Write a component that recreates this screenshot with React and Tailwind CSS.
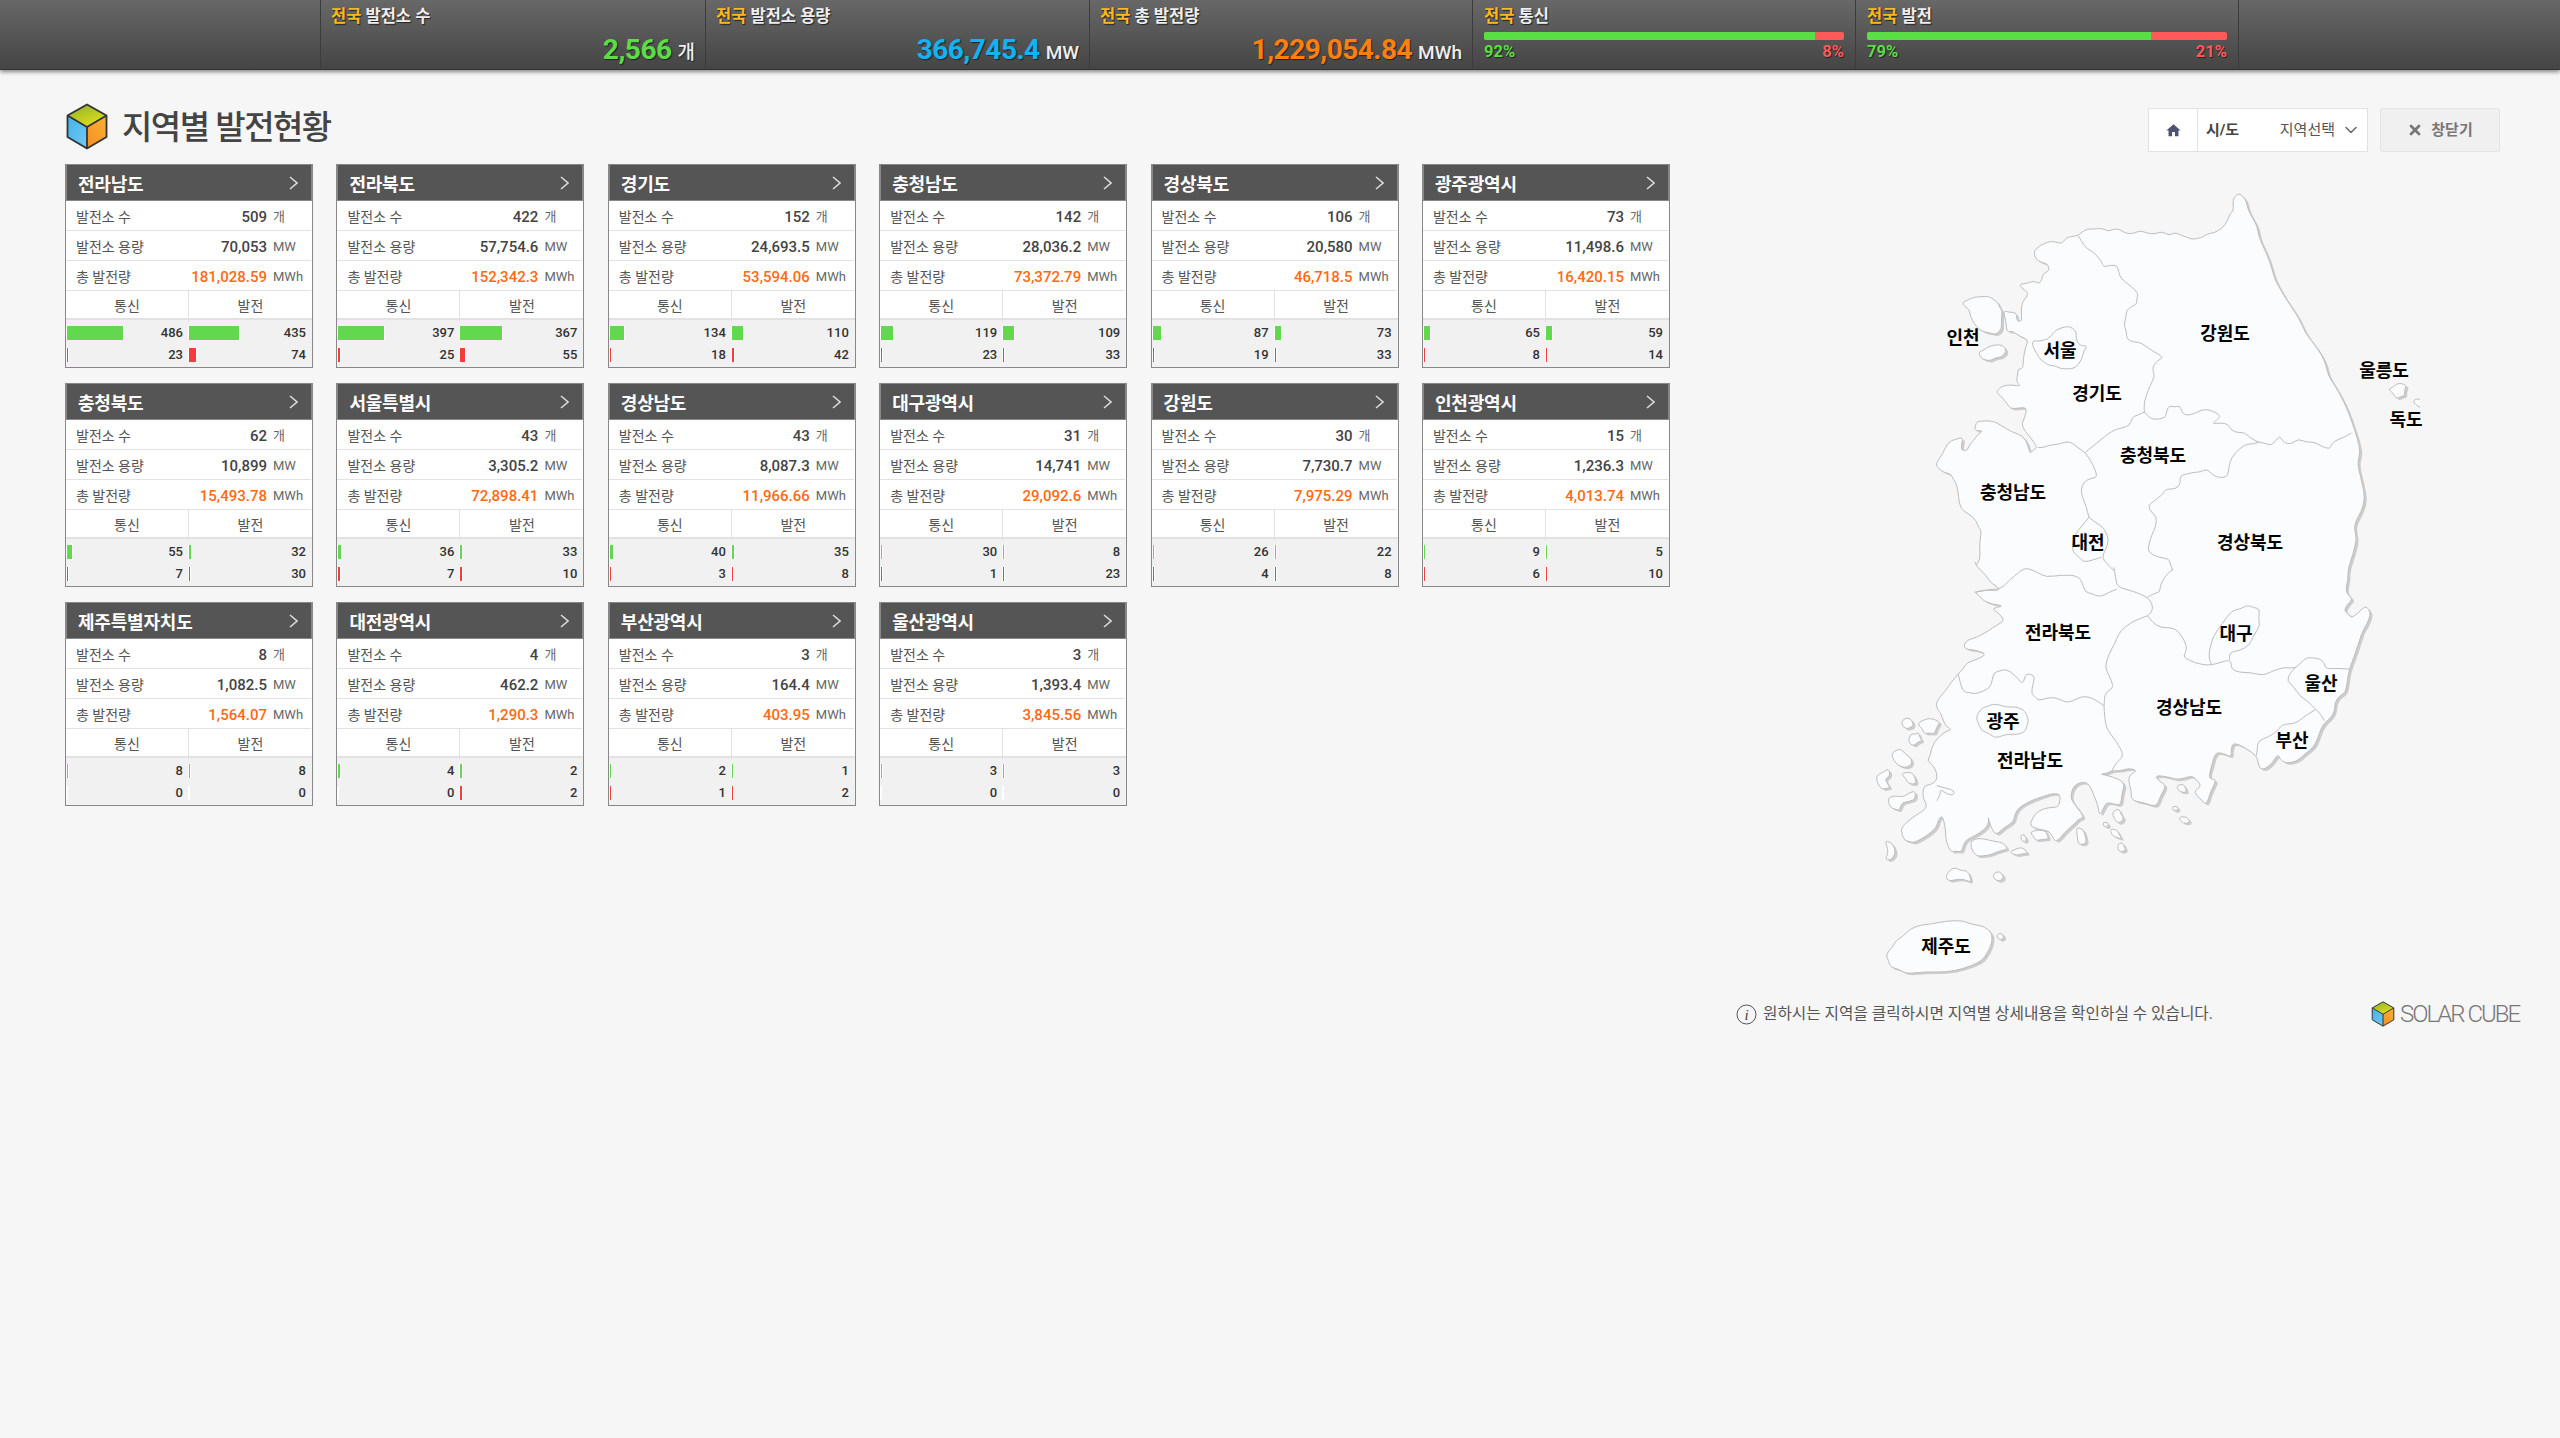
import React from 'react';
import { MdHome } from 'react-icons/md';
import { ChevronDown, X } from 'lucide-react';

const regions = [
  ['전라남도', '509', '70,053', '181,028.59', 486, 435, 23, 74, 56, 50, 1, 7],
  ['전라북도', '422', '57,754.6', '152,342.3', 397, 367, 25, 55, 46, 42, 2, 5],
  ['경기도', '152', '24,693.5', '53,594.06', 134, 110, 18, 42, 14, 11, 1, 2],
  ['충청남도', '142', '28,036.2', '73,372.79', 119, 109, 23, 33, 12, 11, 1, 1],
  ['경상북도', '106', '20,580', '46,718.5', 87, 73, 19, 33, 8, 6, 1, 1],
  ['광주광역시', '73', '11,498.6', '16,420.15', 65, 59, 8, 14, 6, 6, 1, 1],
  ['충청북도', '62', '10,899', '15,493.78', 55, 32, 7, 30, 5, 2, 1, 1],
  ['서울특별시', '43', '3,305.2', '72,898.41', 36, 33, 7, 10, 3, 2, 2, 2],
  ['경상남도', '43', '8,087.3', '11,966.66', 40, 35, 3, 8, 3, 2, 1, 1],
  ['대구광역시', '31', '14,741', '29,092.6', 30, 8, 1, 23, 1, 1, 1, 1],
  ['강원도', '30', '7,730.7', '7,975.29', 26, 22, 4, 8, 1, 1, 1, 1],
  ['인천광역시', '15', '1,236.3', '4,013.74', 9, 5, 6, 10, 1, 1, 1, 1],
  ['제주특별자치도', '8', '1,082.5', '1,564.07', 8, 8, 0, 0, 1, 1, 0, 0],
  ['대전광역시', '4', '462.2', '1,290.3', 4, 2, 0, 2, 2, 2, 0, 2],
  ['부산광역시', '3', '164.4', '403.95', 2, 1, 1, 2, 1, 1, 1, 1],
  ['울산광역시', '3', '1,393.4', '3,845.56', 3, 3, 0, 0, 1, 1, 0, 0],
];

const labels = [
  ['인천', 'left-[103px] top-[168px]'],
  ['서울', 'left-[200px] top-[181px]'],
  ['강원도', 'left-[365px] top-[164px]'],
  ['울릉도', 'left-[524px] top-[201px]'],
  ['독도', 'left-[546px] top-[250px]'],
  ['경기도', 'left-[237px] top-[224px]'],
  ['충청북도', 'left-[293px] top-[286px]'],
  ['충청남도', 'left-[153px] top-[323px]'],
  ['대전', 'left-[228px] top-[373px]'],
  ['경상북도', 'left-[390px] top-[373px]'],
  ['전라북도', 'left-[198px] top-[463px]'],
  ['대구', 'left-[376px] top-[464px]'],
  ['경상남도', 'left-[329px] top-[538px]'],
  ['울산', 'left-[461px] top-[514px]'],
  ['광주', 'left-[143px] top-[552px]'],
  ['전라남도', 'left-[170px] top-[591px]'],
  ['부산', 'left-[432px] top-[571px]'],
  ['제주도', 'left-[86px] top-[777px]'],
];

// traced from the two map crops, each has its own offset
const parse = (s, ox, oy) =>
  s.trim().split(/\s+/).map((p) => {
    const [x, y] = p.split(',').map(Number);
    return [x / 2.8 + ox, y / 3 + oy];
  });
const n = (s) => parse(s, 20, 0);
const o = (s) => parse(s, 0, 390);

// long straight runs get a small bump so the lines look like a hand drawn border
const roughen = (pts, closed) => {
  const out = [];
  const count = closed ? pts.length : pts.length - 1;
  for (let i = 0; i < count; i++) {
    const a = pts[i];
    const b = pts[(i + 1) % pts.length];
    out.push(a);
    const dx = b[0] - a[0];
    const dy = b[1] - a[1];
    const len = Math.hypot(dx, dy);
    if (len > 9) {
      const amp = 1.6 * Math.sin(a[0] * 1.7 + a[1] * 2.3);
      out.push([a[0] + dx / 2 - (dy / len) * amp, a[1] + dy / 2 + (dx / len) * amp]);
    }
  }
  if (!closed) out.push(pts[pts.length - 1]);
  return out;
};

const curve = (raw, closed) => {
  const pts = roughen(raw, closed);
  const mid = (a, b) => [(a[0] + b[0]) / 2, (a[1] + b[1]) / 2];
  const f = (p) => p[0].toFixed(1) + ' ' + p[1].toFixed(1);
  if (closed) {
    const last = pts[pts.length - 1];
    let d = 'M' + f(mid(last, pts[0]));
    pts.forEach((p, i) => {
      d += 'Q' + f(p) + ' ' + f(mid(p, pts[(i + 1) % pts.length]));
    });
    return d + 'Z';
  }
  let d = 'M' + f(pts[0]);
  for (let i = 1; i < pts.length - 1; i++) d += 'Q' + f(pts[i]) + ' ' + f(mid(pts[i], pts[i + 1]));
  return d + 'L' + f(pts[pts.length - 1]);
};

const land = [
  ...n('1005,72 990,85 990,125 975,150 955,180 915,195 890,208 860,205 825,190 810,200 790,187 770,195 730,185 700,195 670,180 640,187 615,178 580,180 555,200 520,207 510,225 470,218 430,245 435,270 470,285 475,305 455,315 445,345 430,335 390,345 415,370 400,395 398,455 385,458 380,430 345,425 355,490 370,485 415,512 405,545 400,600 385,600 380,635 395,652 345,650 325,670 345,690 365,720 412,716 395,770 442,836 420,855 400,800 340,770 300,755 272,757 265,785 290,785 262,815 245,845 228,845 232,805 190,820 155,885 165,900 200,915 215,945 225,1020 270,1055 285,1085 280,1150 270,1190'),
  ...o('320,5 345,40 370,75 392,95 320,100 345,125 400,140 370,150 405,185 360,215 295,245 290,270 355,285 300,310 275,345 240,395 210,440 235,490 258,512 225,530 200,570 188,605 215,640 215,665 180,680 178,720 185,750 115,805 125,845 150,852 215,805 230,768 240,840 255,880 285,880 300,840 355,805 358,770 380,830 430,790 445,745 520,710 560,705 555,745 500,755 475,800 530,815 550,850 600,795 628,775 590,720 600,680 635,670 655,710 670,770 690,730 730,740 742,670 670,645 705,635 745,630 775,635 750,660 760,725 830,745 858,680 825,650 885,662 930,650 955,680 935,700 970,740 1000,660 975,660 995,580 1040,595 1045,550 1110,590 1120,630 1135,630 1170,585 1190,612 1225,605 1270,565 1290,510 1320,475 1330,430 1360,400 1370,330 1405,220 1430,165 1415,140 1375,178 1355,155 1380,120 1360,90 1366,30'),
  ...n('1335,1110 1330,1060 1358,990 1340,900 1345,850 1325,770 1290,680 1255,620 1235,555 1190,490 1150,410 1105,330 1085,260 1060,200 1045,150 1025,95'),
];

const islands = [
  n('230,400 260,385 305,382 330,400 343,425 341,480 325,497 295,490 265,465 250,420'),
  n('275,550 300,535 345,528 355,548 340,565 310,575 285,570'),
  n('1422,660 1445,645 1475,650 1470,680 1445,690'),
  n('1492,695 1505,688 1525,710 1510,715'),
  o('115,485 135,475 150,500 135,510 120,505'),
  o('160,495 195,478 225,490 210,525 180,525'),
  o('140,525 165,520 175,545 150,562 135,550'),
  o('88,585 115,570 135,590 145,615 120,625 95,605'),
  o('45,650 80,628 85,650 70,660 85,685 60,690'),
  o('115,645 145,640 158,675 135,675'),
  o('80,715 120,715 155,695 155,720 120,730 110,755 85,745'),
  o('70,845 95,860 100,885 85,905 70,900 78,870'),
  o('240,950 265,925 300,935 310,970 280,960 245,965'),
  o('372,945 390,935 405,955 390,968 375,960'),
  o('310,845 350,840 400,850 415,870 380,880 345,890 320,885'),
  o('418,880 450,865 470,885 440,890'),
  o('448,830 460,825 468,845 455,850'),
  o('475,820 520,815 530,840 490,845'),
  o('605,805 625,810 635,850 610,855'),
  o('705,760 725,748 740,780 725,795'),
  o('680,790 695,790 695,805 682,803'),
  o('700,810 720,812 735,840 715,835'),
  o('720,855 735,850 745,875 725,880'),
  o('875,742 890,742 890,755 875,755'),
  o('890,775 915,772 925,790 905,795'),
  o('885,680 905,675 915,700 895,700'),
  o('72,1185 100,1145 140,1110 200,1095 290,1085 340,1100 370,1125 360,1175 335,1210 240,1240 130,1245 85,1225'),
  o('380,1130 395,1120 405,1135 392,1145'),
];

const inner = [
  n('425,515 470,510 490,485 525,472 550,490 555,525 580,530 565,570 545,598 520,600 490,590 460,580 440,555'),
  o('325,480 345,445 370,435 410,445 455,450 472,485 460,520 420,525 380,538 340,515'),
];

const borders = [
  n('555,200 580,240 610,265 625,295 665,290 675,330 725,375 720,405 690,425 683,470 690,510 730,520 795,565 765,590 770,620 745,680 740,730'),
  n('740,730 705,745 700,770 650,785 575,850'),
  n('442,836 475,828 530,815 575,850 610,925 570,940 565,980 585,1045'),
  n('740,730 760,750 800,745 810,710 840,710 855,740 905,720 955,740 930,765 975,765 985,785 1020,790 1060,820 1095,830 1120,800 1140,825 1170,810 1220,820 1260,840 1275,815 1320,792'),
  n('1060,820 1025,825 985,865 975,920 945,925 915,900 880,910 840,920 835,955 800,960 780,985 750,1010 775,1045 760,1100 750,1150 810,1170 820,1205'),
  n('585,1045 625,1075 640,1110 620,1165 655,1205'),
  n('585,1045 545,1100 540,1150 570,1180 620,1165'),
  o('711,25 720,85 805,115 820,145 805,170'),
  o('876,30 850,60 840,100 805,115'),
  o('320,100 395,90 445,40 470,28 520,55 610,50 630,100 670,115 720,90'),
  o('805,170 740,205 715,250 685,325 710,385 685,410 683,440 690,510 740,590 705,635'),
  o('275,345 290,400 320,405 365,385 375,340 410,330 455,375 465,345 490,355 480,405 500,425 540,415 580,432 630,410 683,440'),
  o('805,170 840,205 885,210 915,260 905,295 975,320 1035,302 1040,330 1060,340 1130,350 1190,325 1220,325'),
  o('985,318 975,300 990,230 1040,155 1085,138 1120,150 1120,200 1090,260 1035,280 1035,302'),
  o('1370,330 1305,330 1290,300 1250,295 1220,325 1195,365 1230,410 1275,450 1300,485'),
  o('1275,452 1225,490 1190,495 1170,515 1115,545 1110,590'),
  o('215,680 265,695 262,710 225,690 215,725'),
];

function Cube({ className }) {
  return (
    <svg viewBox="0 0 42 47" className={className}>
      <defs>
        <linearGradient id="cubeTop" x1="0.2" y1="0" x2="0.8" y2="1">
          <stop offset="0" stopColor="#8fb32c" />
          <stop offset="1" stopColor="#e8e21a" />
        </linearGradient>
        <linearGradient id="cubeLeft" x1="0" y1="0" x2="1" y2="1">
          <stop offset="0" stopColor="#3fb4ec" />
          <stop offset="1" stopColor="#74c8f0" />
        </linearGradient>
        <linearGradient id="cubeRight" x1="1" y1="0" x2="0" y2="1">
          <stop offset="0" stopColor="#f5b437" />
          <stop offset="1" stopColor="#fb8c21" />
        </linearGradient>
      </defs>
      <path d="M21 1.5 40.5 12.5 21 24 1.5 12.5Z" fill="url(#cubeTop)" />
      <path d="M1.5 12.5 21 24V45.5L1.5 34Z" fill="url(#cubeLeft)" />
      <path d="M40.5 12.5 21 24V45.5L40.5 34Z" fill="url(#cubeRight)" />
      <path d="M21 1.5 40.5 12.5V34L21 45.5 1.5 34V12.5ZM1.5 12.5 21 24 40.5 12.5M21 24V45.5" fill="none" stroke="#333" strokeWidth="1.8" strokeLinejoin="round" />
    </svg>
  );
}

function Stat({ width, title, value, unit, color }) {
  return (
    <div className={`${width} h-full border-l border-[#3c3c3c] px-[10px] pt-[7px] flex flex-col`}>
      <div className="text-[16.5px] font-bold leading-5 text-[#eee] [text-shadow:1px_1px_1px_#222]">
        <span className="text-[#ffb81c]">전국</span> {title}
      </div>
      <div className="flex items-baseline justify-end mt-[7px] [text-shadow:1px_1px_1px_#222]">
        <span className={`text-[28px] leading-8 font-bold tracking-[-0.5px] ${color}`}>{value}</span>
        <span className="text-[19px] leading-8 font-medium text-[#eee] ml-[6px]">{unit}</span>
      </div>
    </div>
  );
}

function Ratio({ width, title, good, bad }) {
  return (
    <div className={`${width} h-full border-l border-[#3c3c3c] px-[11px] pt-[7px] flex flex-col`}>
      <div className="text-[16.5px] font-bold leading-5 text-[#eee] [text-shadow:1px_1px_1px_#222]">
        <span className="text-[#ffb81c]">전국</span> {title}
      </div>
      <div className="flex h-[8px] mt-[5px] rounded-[2px] overflow-hidden bg-[#ff5a5a]">
        <div className="h-full bg-[#5bdd45]" style={{ width: good + '%' }} />
      </div>
      <div className="flex justify-between mt-[2px] text-[16.5px] leading-5 font-bold [text-shadow:1px_1px_1px_#222]">
        <span className="text-[#5bdd45]">{good}%</span>
        <span className="text-[#ff5a5a]">{bad}%</span>
      </div>
    </div>
  );
}

function Row({ label, value, unit, orange }) {
  return (
    <div className="h-[30px] flex items-center border-b border-[#e2e2e2] pl-[10px] pt-[3px] mr-[1px]">
      <span className="flex-1 text-[14px] text-[#555]">{label}</span>
      <span className={`text-[15px] font-medium ${orange ? 'text-[#ff6a13]' : 'text-[#444]'}`}>{value}</span>
      <span className="w-[38px] ml-[6px] text-[13px] text-[#666]">{unit}</span>
    </div>
  );
}

function BarRow({ w, value, color, pr }) {
  return (
    <div className={`h-[14px] flex items-center justify-between ${pr}`}>
      <div className="h-full flex border-x border-white bg-white min-w-[1px]">
        <div className={`h-full ${color}`} style={{ width: w }} />
      </div>
      <span className="text-[13px] font-medium text-[#333]">{value}</span>
    </div>
  );
}

function Card({ r }) {
  const [name, count, cap, gen, c1, g1, c2, g2, wc1, wg1, wc2, wg2] = r;
  return (
    <div className="h-[204px] bg-white border border-[#888]">
      <div className="h-[36px] bg-[#555] border border-[#888] border-t-0 flex items-center justify-between pl-[11px] pr-[13px] pt-[3px]">
        <span className="text-[18px] font-bold tracking-[-0.2px] text-white">{name}</span>
        <svg width="9" height="14" viewBox="0 0 9 14" fill="none" stroke="#ddd" strokeWidth="1.5" className="-mt-[3px]">
          <path d="M1 1 8 7 1 13" />
        </svg>
      </div>
      <Row label="발전소 수" value={count} unit="개" />
      <Row label="발전소 용량" value={cap} unit="MW" />
      <Row label="총 발전량" value={gen} unit="MWh" orange />
      <div className="h-[29px] grid grid-cols-[122px_1fr] border-b-2 border-[#e2e2e2] text-[14px] text-[#555] text-center leading-[31px]">
        <div>통신</div>
        <div className="border-l border-[#e2e2e2]">발전</div>
      </div>
      <div className="h-[47px] bg-[#f1f1f1] grid grid-cols-[122px_1fr]">
        <div className="pt-[6px] flex flex-col gap-[8px]">
          <BarRow w={wc1} value={c1} color="bg-[#62d84e]" pr="pr-[5px]" />
          <BarRow w={wc2} value={c2} color="bg-[#f63b3b]" pr="pr-[5px]" />
        </div>
        <div className="pt-[6px] flex flex-col gap-[8px]">
          <BarRow w={wg1} value={g1} color="bg-[#62d84e]" pr="pr-[6px]" />
          <BarRow w={wg2} value={g2} color="bg-[#f63b3b]" pr="pr-[6px]" />
        </div>
      </div>
    </div>
  );
}

function KoreaMap() {
  const landPath = curve(land, true);
  const islandPaths = islands.map((p) => curve(p, true));
  return (
    <svg viewBox="0 0 560 840" className="absolute inset-0 w-[560px] h-[840px]">
      <g fill="#cdcdcd" transform="translate(2.5 2)">
        <path d={landPath} />
        {islandPaths.map((d, i) => <path key={i} d={d} />)}
      </g>
      <g fill="#fbfcfe" stroke="#bdbdbd" strokeWidth="1">
        <path d={landPath} />
        {islandPaths.map((d, i) => <path key={i} d={d} />)}
      </g>
      <g fill="none" stroke="#bdbdbd" strokeWidth="1">
        {inner.map((p, i) => <path key={i} d={curve(p, true)} />)}
        {borders.map((p, i) => <path key={i} d={curve(p, false)} />)}
      </g>
    </svg>
  );
}

export default function App() {
  return (
    <div className="min-h-[1438px] bg-[#f6f6f6] font-['Roboto','Noto_Sans_CJK_KR',sans-serif]">
      <header className="h-[70px] pl-[320px] flex bg-linear-to-b from-[#686868] to-[#454545] border-b border-[#333] shadow-[0_2px_4px_rgba(0,0,0,0.45)]">
        <Stat width="w-[385px]" title="발전소 수" value="2,566" unit="개" color="text-[#5bdd45]" />
        <Stat width="w-[384px]" title="발전소 용량" value="366,745.4" unit="MW" color="text-[#0fb4f5]" />
        <Stat width="w-[383px]" title="총 발전량" value="1,229,054.84" unit="MWh" color="text-[#ff7f0f]" />
        <Ratio width="w-[383px]" title="통신" good={92} bad={8} />
        <Ratio width="w-[384px] border-r" title="발전" good={79} bad={21} />
      </header>

      <main className="flex items-start">
        <section className="w-[1720px] pl-[65px]">
          <div className="h-[94px] pt-[33px] flex items-start gap-[13px]">
            <Cube className="w-[44px] h-[47px]" />
            <h1 className="text-[33px] leading-[46px] pt-[2px] font-medium tracking-[-1.5px] text-[#444]">지역별 발전현황</h1>
          </div>
          <div className="grid grid-cols-[repeat(6,248px)] gap-x-[23.4px] gap-y-[15px]">
            {regions.map((r) => <Card key={r[0]} r={r} />)}
          </div>
        </section>

        <section className="w-[840px] pt-[38px]">
          <div className="flex justify-end pr-[60px] gap-[12px]">
            <div className="w-[220px] h-[44px] flex items-center bg-white border border-[#e2e2e2]">
              <div className="w-[49px] h-full flex items-center justify-center border-r border-[#e2e2e2]">
                <MdHome size={17} color="#4f5270" />
              </div>
              <span className="ml-[8px] text-[15px] font-bold text-[#444]">시/도</span>
              <span className="ml-auto text-[15px] text-[#555]">지역선택</span>
              <ChevronDown size={20} strokeWidth={1.8} color="#666" className="mx-[6px]" />
            </div>
            <div className="w-[120px] h-[44px] flex items-center justify-center gap-[8px] bg-[#f0f0f0] border border-[#e4e4e4] rounded-[2px] text-[15px] font-bold text-[#777]">
              <X size={16} strokeWidth={4} />
              창닫기
            </div>
          </div>

          <div className="relative w-[560px] h-[832px] mt-[17px] ml-[140px]">
            <KoreaMap />
            {labels.map(([text, pos]) => (
              <span key={text} className={`absolute ${pos} -translate-x-1/2 -translate-y-1/2 text-[18px] font-bold text-black whitespace-nowrap`}>
                {text}
              </span>
            ))}
          </div>

          <div className="flex items-center ml-[16px] h-[26px]">
            <svg width="21" height="21" viewBox="0 0 21 21" className="mr-[6px]">
              <circle cx="10.5" cy="10.5" r="9.5" fill="none" stroke="#555" strokeWidth="1" />
              <text x="10.5" y="16" textAnchor="middle" fontSize="15" fontStyle="italic" fontFamily="Liberation Serif" fill="#444">i</text>
            </svg>
            <span className="text-[15.7px] text-[#555]">원하시는 지역을 클릭하시면 지역별 상세내용을 확인하실 수 있습니다.</span>
            <Cube className="w-[24px] h-[26px] ml-auto" />
            <span className="w-[125px] ml-[5px] mr-[35px] text-[24px] font-light tracking-[-2px] text-[#777] whitespace-nowrap">SOLAR CUBE</span>
          </div>
        </section>
      </main>
    </div>
  );
}
